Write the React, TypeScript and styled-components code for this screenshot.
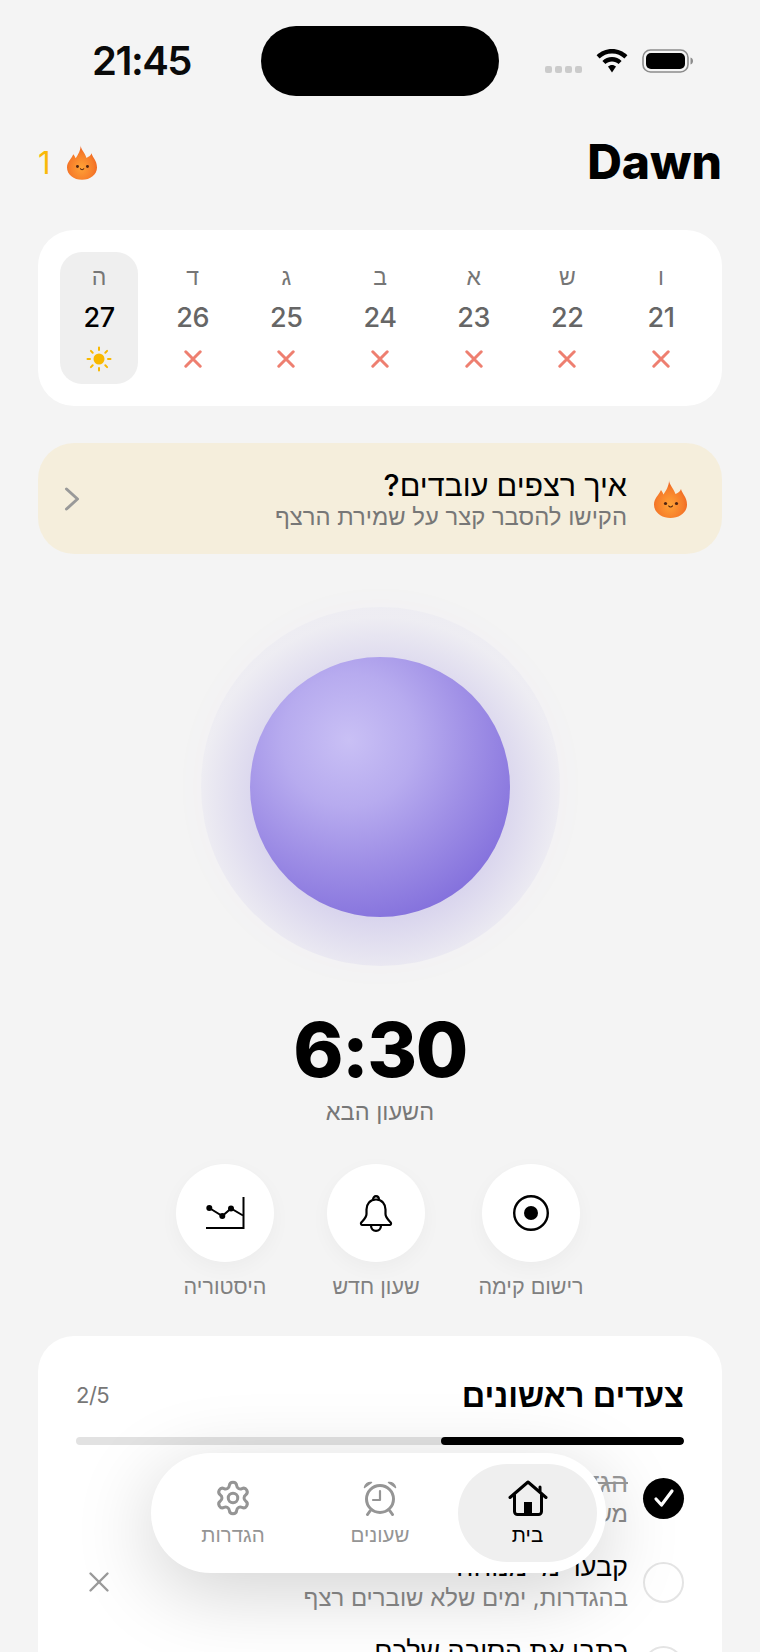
import React from 'react';
import styled, { createGlobalStyle } from 'styled-components';
import { Settings, X } from 'lucide-react';

const GlobalStyle = createGlobalStyle`
  html, body {
    margin: 0;
    padding: 0;
    background: #f4f4f4;
  }
  body {
    font-family: Inter, "Liberation Sans", Arial, sans-serif;
    color: #000;
  }
`;

const Screen = styled.div`
  position: relative;
  width: 760px;
  height: 1652px;
  overflow: hidden;
  background: #f4f4f4;
  direction: rtl;
`;

const StatusBar = styled.div`
  direction: ltr;
  display: grid;
  grid-template-columns: 261px 238px 1fr;
  height: 96px;
  padding-top: 26px;
`;

const Clock = styled.div`
  font-size: 40px;
  font-weight: 600;
  letter-spacing: -1.5px;
  line-height: 70px;
  text-align: right;
  padding-right: 70px;
  color: #0a0a0a;
`;

const Island = styled.div`
  height: 70px;
  border-radius: 35px;
  background: #000;
`;

const StatusIcons = styled.div`
  display: flex;
  align-items: flex-start;
  padding: 23px 0 0 46px;
`;

const SignalDots = styled.div`
  display: flex;
  gap: 3px;
  margin-top: 17px;
  margin-right: 14px;
`;

const SignalDot = styled.span`
  width: 7px;
  height: 7px;
  border-radius: 2px;
  background: #cbcbcb;
`;

const Battery = styled.span`
  display: flex;
  margin-left: 14px;
`;

const Content = styled.main`
  padding: 0 38px;
`;

const Header = styled.header`
  display: flex;
  justify-content: space-between;
  align-items: center;
  height: 80px;
  margin-bottom: 28px;
`;

const Title = styled.h1`
  margin: 0;
  font-size: 48px;
  font-weight: 800;
  line-height: 80px;
`;

const Streak = styled.div`
  direction: ltr;
  display: flex;
  align-items: center;
  gap: 16px;
  font-size: 31px;
  font-weight: 400;
  color: #f9b90a;
`;

const Card = styled.section`
  background: #fff;
  border-radius: 36px;
`;

const WeekCard = styled(Card)`
  display: flex;
  justify-content: space-between;
  padding: 22px;
`;

const DayCell = styled.div<{ $today?: boolean }>`
  width: 78px;
  height: 132px;
  box-sizing: border-box;
  padding-top: 11px;
  border-radius: 22px;
  display: flex;
  flex-direction: column;
  align-items: center;
  background: ${(p) => (p.$today ? '#efefef' : 'transparent')};
`;

const DayLetter = styled.span`
  height: 28px;
  line-height: 28px;
  font-size: 23px;
  color: #767676;
`;

const DayNumber = styled.span<{ $today?: boolean }>`
  height: 44px;
  margin-top: 5px;
  line-height: 44px;
  font-size: 27px;
  font-weight: 500;
  letter-spacing: -0.4px;
  color: ${(p) => (p.$today ? '#000' : '#666')};
`;

const DayMark = styled.span`
  display: flex;
  align-items: center;
  justify-content: center;
  height: 26px;
  margin-top: 6px;
`;

const StreakBanner = styled.section`
  display: flex;
  align-items: center;
  height: 111px;
  margin-top: 37px;
  padding: 0 35px 0 26px;
  border-radius: 36px;
  background: #f5eedc;
`;

const BannerText = styled.div`
  flex: 1;
  margin-right: 27px;
  padding-top: 2px;
`;

const BannerTitle = styled.div`
  font-size: 30.500px;
  font-weight: 500;
  line-height: 34px;
`;

const BannerSub = styled.div`
  font-size: 23.800px;
  line-height: 30px;
  color: #777;
`;

const OrbGlow = styled.div`
  width: 359px;
  height: 359px;
  margin: 53px auto 0;
  border-radius: 50%;
  display: flex;
  align-items: center;
  justify-content: center;
  background: radial-gradient(circle 180px at 50% 53%, rgba(122, 103, 214, 0.22) 68%, rgba(122, 103, 214, 0.05) 100%);
  box-shadow: 0 0 40px rgba(122, 103, 214, 0.025);
`;

const Orb = styled.div`
  width: 260px;
  height: 260px;
  border-radius: 50%;
  background: radial-gradient(circle 190px at 38% 32%, #c9c0f5 0%, #b7abef 35%, #9f8fe6 65%, #8370dc 100%);
`;

const NextTime = styled.div`
  margin-top: 39px;
  text-align: center;
  direction: ltr;
  font-size: 76px;
  font-weight: 800;
  letter-spacing: -1.5px;
  line-height: 88px;
`;

const NextLabel = styled.div`
  margin-top: 6px;
  text-align: center;
  font-size: 23.500px;
  line-height: 26px;
  color: #777;
`;

const Actions = styled.div`
  display: flex;
  justify-content: center;
  margin-top: 39px;
`;

const ActionItem = styled.div<{ $width: number }>`
  width: ${(p) => p.$width}px;
  display: flex;
  flex-direction: column;
  align-items: center;
`;

const ActionCircle = styled.div`
  width: 98px;
  height: 98px;
  border-radius: 50%;
  background: #fff;
  display: flex;
  align-items: center;
  justify-content: center;
  box-shadow: 0 6px 20px rgba(0, 0, 0, 0.035);
`;

const ActionLabel = styled.div`
  margin-top: 11px;
  font-size: 21.500px;
  line-height: 26px;
  color: #808080;
  white-space: nowrap;
`;

const StepsCard = styled(Card)`
  margin-top: 37px;
  padding: 34px 38px 0;
  height: 340px;
`;

const StepsHead = styled.div`
  display: flex;
  justify-content: space-between;
  align-items: center;
  height: 50px;
`;

const StepsTitle = styled.h2`
  margin: 0;
  font-size: 32.500px;
  font-weight: 600;
`;

const StepsCount = styled.span`
  direction: ltr;
  font-size: 22px;
  letter-spacing: -0.5px;
  color: #777;
`;

const Progress = styled.div`
  height: 8px;
  margin-top: 17px;
  border-radius: 4px;
  background: #e2e2e2;
  overflow: hidden;
`;

const ProgressFill = styled.div`
  height: 100%;
  border-radius: 4px;
  background: #000;
`;

const StepList = styled.div`
  margin-top: 11px;
`;

const StepRow = styled.div`
  display: flex;
  align-items: center;
  height: 84px;
  gap: 15px;
`;

const StepCheck = styled.div<{ $done?: boolean }>`
  flex: none;
  width: 41px;
  height: 41px;
  box-sizing: border-box;
  border-radius: 50%;
  display: flex;
  align-items: center;
  justify-content: center;
  background: ${(p) => (p.$done ? '#000' : '#fff')};
  border: ${(p) => (p.$done ? 'none' : '2.5px solid #e4e4e4')};
`;

const StepText = styled.div`
  flex: 1;
  min-width: 0;
`;

const StepTitle = styled.div<{ $done?: boolean }>`
  font-size: 27px;
  font-weight: 500;
  line-height: 32px;
  white-space: nowrap;
  color: ${(p) => (p.$done ? '#999' : '#000')};
  text-decoration: ${(p) => (p.$done ? 'line-through' : 'none')};
`;

const StepSub = styled.div`
  font-size: 23.900px;
  line-height: 30px;
  white-space: nowrap;
  color: #8a8a8a;
`;

const Dismiss = styled.span`
  display: flex;
  margin-left: 6px;
  color: #9a9a9a;
`;

const BottomNav = styled.nav`
  position: absolute;
  left: 151px;
  top: 1453px;
  width: 455px;
  height: 120px;
  border-radius: 60px;
  background: #fff;
  box-shadow: 0 18px 80px rgba(0, 0, 0, 0.18);
  display: flex;
  align-items: center;
  padding: 0 9px;
  box-sizing: border-box;
`;

const NavItem = styled.div<{ $width: number; $active?: boolean }>`
  flex: none;
  width: ${(p) => p.$width}px;
  height: 98px;
  border-radius: 49px;
  display: flex;
  flex-direction: column;
  align-items: center;
  padding-top: 13px;
  box-sizing: border-box;
  background: ${(p) => (p.$active ? '#efefef' : 'transparent')};
  color: ${(p) => (p.$active ? '#000' : '#959595')};
`;

const NavIcon = styled.span`
  display: flex;
  height: 42px;
  align-items: center;
`;

const NavLabel = styled.span<{ $active?: boolean }>`
  margin-top: 3px;
  font-size: 20.500px;
  line-height: 26px;
  font-weight: ${(p) => (p.$active ? 500 : 400)};
`;

const FlameIcon = ({ id, width, height }: { id: string; width: number; height: number }) => (
  <svg width={width} height={height} viewBox="0 0 33 39">
    <defs>
      <radialGradient id={id} cx="48%" cy="66%" r="68%">
        <stop offset="0%" stopColor="#ffa236" />
        <stop offset="60%" stopColor="#f67c2a" />
        <stop offset="100%" stopColor="#e8531b" />
      </radialGradient>
    </defs>
    <path
      d="M15 0C14.500 5 19.500 9 21.500 15C23.500 14 26 13 27 10C28 14.500 33 18 33 25.500C33 33.500 25.500 39 16.500 39C7.500 39 0 33.500 0 25.500C0 19.500 4.500 16.500 7 11C8 12.500 9 14 9.500 15.500C12 11.500 15.500 6.500 15 0Z"
      fill={`url(#${id})`}
    />
    <circle cx="11.500" cy="24.500" r="1.600" fill="#4f2412" />
    <circle cx="22.500" cy="24.500" r="1.600" fill="#4f2412" />
    <path d="M14.800 27c.8 1.300 2.800 1.300 3.600 0" fill="none" stroke="#4f2412" strokeWidth="1.200" strokeLinecap="round" />
  </svg>
);

const WifiIcon = () => (
  <svg width="32" height="24" viewBox="0 0 32 24">
    <path d="M16 0C10 0 4.600 2.400 0.600 6.200L3.600 9.400C6.800 6.300 11.200 4.400 16 4.400S25.200 6.300 28.400 9.400L31.400 6.200C27.400 2.400 22 0 16 0Z" fill="#000" />
    <path d="M16 8C12.300 8 8.900 9.500 6.400 11.900L9.400 15C11.100 13.400 13.400 12.400 16 12.400S20.900 13.400 22.600 15L25.600 11.900C23.100 9.500 19.700 8 16 8Z" fill="#000" />
    <path d="M16 16C14.500 16 13.100 16.600 12 17.600L16 23.500L20 17.600C18.900 16.600 17.500 16 16 16Z" fill="#000" />
  </svg>
);

const BatteryIcon = () => (
  <svg width="52" height="24" viewBox="0 0 52 24">
    <rect x="1" y="1" width="45" height="22" rx="7.500" fill="none" stroke="#8c8c8c" strokeWidth="1.600" />
    <rect x="4" y="4" width="39" height="16" rx="5" fill="#000" />
    <path d="M48.500 8.500c1.600.4 2.500 1.800 2.500 3.500s-.9 3.100-2.500 3.500z" fill="#8c8c8c" />
  </svg>
);

const SunIcon = () => (
  <svg width="26" height="26" viewBox="0 0 26 26" stroke="#f8b800" strokeWidth="2" strokeLinecap="round">
    <circle cx="13" cy="13" r="5.500" fill="#f8b800" stroke="none" />
    <path d="M13 1.500v2.500M13 22v2.500M1.500 13H4M22 13h2.500M4.900 4.900l1.800 1.800M19.300 19.300l1.800 1.800M4.900 21.100l1.800-1.800M19.300 6.700l1.800-1.800" />
  </svg>
);

const CrossIcon = () => (
  <svg width="18" height="18" viewBox="0 0 18 18" stroke="#ee7f70" strokeWidth="3" strokeLinecap="round">
    <path d="M1.800 1.800l14.400 14.400M16.200 1.800L1.800 16.200" />
  </svg>
);

const Chevron = () => (
  <svg width="16" height="24" viewBox="0 0 16 24" fill="none" stroke="#999" strokeWidth="3" strokeLinecap="round" strokeLinejoin="round">
    <path d="M2.500 2l11 10-11 10" />
  </svg>
);

const RecordIcon = () => (
  <svg width="38" height="38" viewBox="0 0 38 38">
    <circle cx="19" cy="19" r="16.800" fill="none" stroke="#000" strokeWidth="2.400" />
    <circle cx="19" cy="19" r="7" fill="#000" />
  </svg>
);

const BellIcon = () => (
  <svg width="34" height="37" viewBox="0 0 34 37" fill="none" stroke="#000" strokeWidth="2.200" strokeLinecap="round" strokeLinejoin="round">
    <path d="M17 4.500C11 4.500 7.500 9 7.500 14.500V19C7.500 22.500 4.500 25 2.300 27.500C1.500 28.500 2 30 3.500 30H30.500C32 30 32.500 28.500 31.700 27.500C29.500 25 26.500 22.500 26.500 19V14.500C26.500 9 23 4.500 17 4.500Z" />
    <path d="M14 4.800C14 2.500 15.300 1.200 17 1.200S20 2.500 20 4.800" />
    <path d="M12 30.500C12 33.800 14.300 35.800 17 35.800S22 33.800 22 30.500" />
  </svg>
);

const HistoryIcon = () => (
  <svg width="40" height="34" viewBox="0 0 40 34" fill="none" stroke="#000" strokeWidth="2">
    <path d="M1 32h37.500V1" />
    <path d="M4.300 12l13 8 8.700-7.500 12 7" />
    <circle cx="4.300" cy="12" r="3" fill="#000" stroke="none" />
    <circle cx="17.300" cy="20" r="3" fill="#000" stroke="none" />
    <circle cx="26" cy="12.500" r="3" fill="#000" stroke="none" />
  </svg>
);

const HomeIcon = () => (
  <svg width="40" height="36" viewBox="0 0 40 36" fill="none" stroke="#000" strokeWidth="3" strokeLinejoin="round" strokeLinecap="round">
    <path d="M2 17.500L20 2l18 15.500" />
    <path d="M32 7V11" />
    <path d="M6.500 15v16.500a3 3 0 0 0 3 3h21a3 3 0 0 0 3-3V15" />
    <rect x="16" y="22" width="8" height="12.500" fill="#000" stroke="none" />
  </svg>
);

const AlarmIcon = () => (
  <svg width="34" height="36" viewBox="0 0 34 36" fill="none" stroke="#959595" strokeWidth="3" strokeLinecap="round" strokeLinejoin="round">
    <circle cx="17" cy="19" r="13.500" />
    <path d="M17 11v9H10" strokeWidth="2.200" />
    <path d="M7 31l-2.500 3.500M27 31l2.500 3.500" />
    <path d="M1.500 7.500C2 4 5 2 8.500 2.500zM32.500 7.500C32 4 29 2 25.500 2.500z" fill="#959595" strokeWidth="1.500" />
  </svg>
);

const days = [
  { letter: 'ו', date: 21 },
  { letter: 'ש', date: 22 },
  { letter: 'א', date: 23 },
  { letter: 'ב', date: 24 },
  { letter: 'ג', date: 25 },
  { letter: 'ד', date: 26 },
  { letter: 'ה', date: 27, today: true },
];

const App = () => (
  <Screen>
    <GlobalStyle />
    <StatusBar>
      <Clock>21:45</Clock>
      <Island />
      <StatusIcons>
        <SignalDots>
          <SignalDot />
          <SignalDot />
          <SignalDot />
          <SignalDot />
        </SignalDots>
        <WifiIcon />
        <Battery>
          <BatteryIcon />
        </Battery>
      </StatusIcons>
    </StatusBar>
    <Content>
      <Header>
        <Title>Dawn</Title>
        <Streak>
          1
          <FlameIcon id="flame-small" width={30} height={36} />
        </Streak>
      </Header>
      <WeekCard>
        {days.map((day) => (
          <DayCell key={day.date} $today={day.today}>
            <DayLetter>{day.letter}</DayLetter>
            <DayNumber $today={day.today}>{day.date}</DayNumber>
            <DayMark>{day.today ? <SunIcon /> : <CrossIcon />}</DayMark>
          </DayCell>
        ))}
      </WeekCard>
      <StreakBanner>
        <FlameIcon id="flame-large" width={33} height={39} />
        <BannerText>
          <BannerTitle>איך רצפים עובדים?</BannerTitle>
          <BannerSub>הקישו להסבר קצר על שמירת הרצף</BannerSub>
        </BannerText>
        <Chevron />
      </StreakBanner>
      <OrbGlow>
        <Orb />
      </OrbGlow>
      <NextTime>6:30</NextTime>
      <NextLabel>השעון הבא</NextLabel>
      <Actions>
        <ActionItem $width={155}>
          <ActionCircle>
            <RecordIcon />
          </ActionCircle>
          <ActionLabel>רישום קימה</ActionLabel>
        </ActionItem>
        <ActionItem $width={155}>
          <ActionCircle>
            <BellIcon />
          </ActionCircle>
          <ActionLabel>שעון חדש</ActionLabel>
        </ActionItem>
        <ActionItem $width={147}>
          <ActionCircle>
            <HistoryIcon />
          </ActionCircle>
          <ActionLabel>היסטוריה</ActionLabel>
        </ActionItem>
      </Actions>
      <StepsCard>
        <StepsHead>
          <StepsTitle>צעדים ראשונים</StepsTitle>
          <StepsCount>2/5</StepsCount>
        </StepsHead>
        <Progress>
          <ProgressFill style={{ width: '40%' }} />
        </Progress>
        <StepList>
          <StepRow>
            <StepCheck $done>
              <svg width="22" height="20" viewBox="0 0 22 20" fill="none" stroke="#fff" strokeWidth="3.200" strokeLinecap="round" strokeLinejoin="round">
                <path d="M3 11l5.500 6L19 3" />
              </svg>
            </StepCheck>
            <StepText>
              <StepTitle $done>הגדירו שעון</StepTitle>
              <StepSub>משכו לבחירת השעה</StepSub>
            </StepText>
          </StepRow>
          <StepRow>
            <StepCheck />
            <StepText>
              <StepTitle>קבעו ימי מנוחה</StepTitle>
              <StepSub>בהגדרות, ימים שלא שוברים רצף</StepSub>
            </StepText>
            <Dismiss>
              <X size={34} strokeWidth={1.700} />
            </Dismiss>
          </StepRow>
          <StepRow>
            <StepCheck />
            <StepText>
              <StepTitle>כתבו את הסיבה שלכם</StepTitle>
              <StepSub>מה מעיר אתכם בבוקר</StepSub>
            </StepText>
          </StepRow>
        </StepList>
      </StepsCard>
    </Content>
    <BottomNav>
      <NavItem $width={139} $active>
        <NavIcon>
          <HomeIcon />
        </NavIcon>
        <NavLabel $active>בית</NavLabel>
      </NavItem>
      <NavItem $width={156}>
        <NavIcon>
          <AlarmIcon />
        </NavIcon>
        <NavLabel>שעונים</NavLabel>
      </NavItem>
      <NavItem $width={138}>
        <NavIcon>
          <Settings size={38} strokeWidth={1.900} />
        </NavIcon>
        <NavLabel>הגדרות</NavLabel>
      </NavItem>
    </BottomNav>
  </Screen>
);

export default App;
